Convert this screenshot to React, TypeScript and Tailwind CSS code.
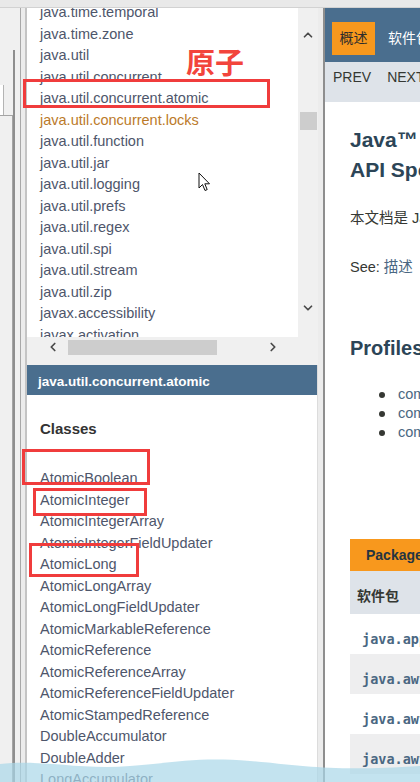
import { ChevronUp, ChevronDown, ChevronLeft, ChevronRight } from "lucide-react"

const packages = [
  "java.time.temporal",
  "java.time.zone",
  "java.util",
  "java.util.concurrent",
  "java.util.concurrent.atomic",
  "java.util.concurrent.locks",
  "java.util.function",
  "java.util.jar",
  "java.util.logging",
  "java.util.prefs",
  "java.util.regex",
  "java.util.spi",
  "java.util.stream",
  "java.util.zip",
  "javax.accessibility",
  "javax.activation",
]

const classes = [
  "AtomicBoolean",
  "AtomicInteger",
  "AtomicIntegerArray",
  "AtomicIntegerFieldUpdater",
  "AtomicLong",
  "AtomicLongArray",
  "AtomicLongFieldUpdater",
  "AtomicMarkableReference",
  "AtomicReference",
  "AtomicReferenceArray",
  "AtomicReferenceFieldUpdater",
  "AtomicStampedReference",
  "DoubleAccumulator",
  "DoubleAdder",
  "LongAccumulator",
  "LongAdder",
]

const tableRows = ["java.applet", "java.awt", "java.awt.color", "java.awt.datatransfer"]

function LeftChrome() {
  return (
    <div className="w-[20px] shrink-0 flex bg-[#f0f0f0]">
      <div className="w-[13px] flex flex-col">
        <div className="h-[77px]" />
        <div className="h-[30px] flex">
          <div className="w-[4px] bg-white border-r border-[#b4b4b4]" />
        </div>
        <div className="flex-1 border-t border-r border-[#a4a4a4]" />
      </div>
      <div className="w-[2px] flex flex-col">
        <div className="h-[42px]" />
        <div className="flex-1 bg-[#8e8e8e]" />
      </div>
    </div>
  )
}

function PackageFrame() {
  return (
    <div className="h-[349px] shrink-0 flex flex-col bg-[#f0f0f0]">
      <div className="flex flex-1 min-h-0">
        <div className="flex-1 bg-white overflow-hidden">
          <div className="-mt-[6px]">
            {packages.map((p) => (
              <div
                key={p}
                className={`h-[21.5px] leading-[21.5px] pl-[13px] text-[14.5px] whitespace-nowrap ${
                  p === "java.util.concurrent.locks" ? "text-[#bb7a2a]" : "text-[#4e566b]"
                }`}
              >
                {p}
              </div>
            ))}
          </div>
        </div>
        <div className="w-[20px] flex flex-col items-center">
          <ChevronUp className="mt-[20px] w-[14px] h-[14px] text-[#4a4a4a]" strokeWidth={3} />
          <div className="mt-[70px] w-[17px] h-[18px] bg-[#cdcdcd]" />
          <ChevronDown className="mt-[171px] w-[14px] h-[14px] text-[#4a4a4a]" strokeWidth={3} />
        </div>
      </div>
      <div className="h-[20px] flex">
        <div className="flex-1 flex items-center">
          <ChevronLeft className="ml-[19px] w-[14px] h-[14px] text-[#4a4a4a]" strokeWidth={3} />
          <div className="ml-[8px] w-[149px] h-[15px] bg-[#cdcdcd]" />
          <ChevronRight className="ml-[49px] w-[14px] h-[14px] text-[#4a4a4a]" strokeWidth={3} />
        </div>
        <div className="w-[20px]" />
      </div>
    </div>
  )
}

function ClassFrame() {
  return (
    <div className="flex-1 min-h-0 bg-white overflow-hidden border-r border-[#dcdcdc]">
      <div className="h-[30px] bg-[#4a6e8e] pl-[11px] pt-[4px] text-[13.5px] leading-[26px] font-bold text-white">
        java.util.concurrent.atomic
      </div>
      <div className="mt-[24px] pl-[13px] h-[20px] leading-[20px] text-[15px] font-bold text-[#333333]">Classes</div>
      <div className="mt-[29px]">
        {classes.map((c) => (
          <div key={c} className="h-[21.5px] leading-[21.5px] pl-[13px] text-[14.5px] text-[#4e566b] whitespace-nowrap">
            {c}
          </div>
        ))}
      </div>
    </div>
  )
}

function OverviewFrame() {
  const cjk = "font-['Liberation_Sans','Noto_Sans_CJK_SC',sans-serif]"
  return (
    <div className={`flex-1 min-w-0 bg-white overflow-hidden whitespace-nowrap ${cjk}`}>
      <div className="h-[54px] bg-[#4a6e8e] flex items-start pt-[14px] pl-[7px]">
        <div className="w-[43px] h-[33px] shrink-0 bg-[#f8981d] flex items-center justify-center text-[14px] text-[#2c2c2c]">
          概述
        </div>
        <div className="ml-[13px] h-[33px] flex items-center text-[14px] text-white">软件包</div>
      </div>
      <div className="h-[40px] bg-[#dee3e9] pl-[8px] pt-[7px] flex gap-[16px] text-[14px] leading-[16px] text-[#353833]">
        <span>PREV</span>
        <span>NEXT</span>
      </div>
      <div className="pl-[25px]">
        <div className="mt-[23px] text-[21px] leading-[30px] font-bold text-[#2c4557]">
          <div>Java™ Platform, Standard Edition 8</div>
          <div>API Specification</div>
        </div>
        <div className="mt-[23px] text-[14.5px] leading-[20px] text-[#353833]">
          本文档是 Java™ Platform Standard Edition 8 的 API 规范。
        </div>
        <div className="mt-[29px] text-[14.5px] leading-[20px] text-[#353833]">
          See: <span className="text-[#4a6782]">描述</span>
        </div>
        <div className="mt-[58px] text-[20px] leading-[26px] font-bold text-[#2c4557]">Profiles</div>
        <div className="mt-[24px]">
          {["compact1", "compact2", "compact3"].map((p) => (
            <div key={p} className="h-[19px] flex items-center pl-[29px]">
              <div className="w-[6px] h-[6px] shrink-0 rounded-full bg-[#353833]" />
              <span className="ml-[13px] text-[14.5px] text-[#4a6782]">{p}</span>
            </div>
          ))}
        </div>
        <div className="mt-[97px] h-[32px] bg-[#f8981d] pl-[16px] flex items-center text-[14px] font-bold text-[#253441]">
          Packages
        </div>
        <div className="h-[43px] bg-[#dee3e9] pl-[7px] pt-[15px] text-[14px] leading-[20px] font-bold text-[#353833]">
          软件包
        </div>
        {tableRows.map((r, i) => (
          <div
            key={r}
            className={`h-[40px] pl-[12px] pt-[15px] leading-[20px] text-[13.5px] font-bold text-[#4a6782] font-['DejaVu_Sans_Mono',monospace] ${
              i % 2 === 1 ? "bg-[#eeeeef]" : "bg-white"
            }`}
          >
            {r}
          </div>
        ))}
      </div>
    </div>
  )
}

export default function App() {
  return (
    <div className="relative w-[420px] h-[782px] overflow-hidden bg-[#f0f0f0] flex flex-col font-['Liberation_Sans',Arial,sans-serif]">
      <div className="h-[8px] shrink-0 bg-[#e9e9e9] border-b border-[#d2d2d2]" />
      <div className="flex flex-1 min-h-0">
        <LeftChrome />
        <div className="w-[7px] shrink-0 bg-[#ececec] border-l border-r-2 border-l-[#a8a8a8] border-r-[#c4c4c4]" />
        <div className="w-[291px] shrink-0 flex flex-col">
          <PackageFrame />
          <div className="h-[8px] shrink-0 bg-[#f0f0f0]" />
          <ClassFrame />
        </div>
        <div className="w-[7px] shrink-0 bg-[#ececec] border-r-2 border-[#8e8e8e]" />
        <OverviewFrame />
      </div>

      {/* annotations drawn over the screenshot */}
      <div className="absolute left-[23px] top-[79px] w-[247px] h-[29px] border-[3px] border-[#f03c3c]" />
      <div className="absolute left-[186px] top-[46px] text-[29px] leading-[30px] font-bold text-[#f2453c] font-['Noto_Sans_CJK_SC',sans-serif]">
        原子
      </div>
      <div className="absolute left-[22px] top-[449px] w-[128px] h-[36px] border-[3px] border-[#f03c3c]" />
      <div className="absolute left-[33px] top-[488px] w-[114px] h-[28px] border-[3px] border-[#f03c3c]" />
      <div className="absolute left-[29px] top-[543px] w-[110px] h-[34px] border-[3px] border-[#f03c3c]" />

      {/* mouse pointer */}
      <svg className="absolute left-[198px] top-[172px]" width="13" height="20" viewBox="0 0 13 20">
        <path d="M1 1 L1 16 L4.5 12.5 L7 18.5 L9.2 17.6 L6.8 11.8 L11.5 11.8 Z" fill="white" stroke="#111" strokeWidth="1" />
      </svg>

      {/* video overlay wave */}
      <svg className="absolute left-0 bottom-0" width="420" height="30" viewBox="0 0 420 30">
        <path
          d="M0 12 C 40 7, 80 18, 130 14 S 200 5, 250 9 S 330 20, 420 14 L420 30 L0 30 Z"
          fill="#a9d7e8"
          opacity="0.7"
        />
      </svg>
    </div>
  )
}
